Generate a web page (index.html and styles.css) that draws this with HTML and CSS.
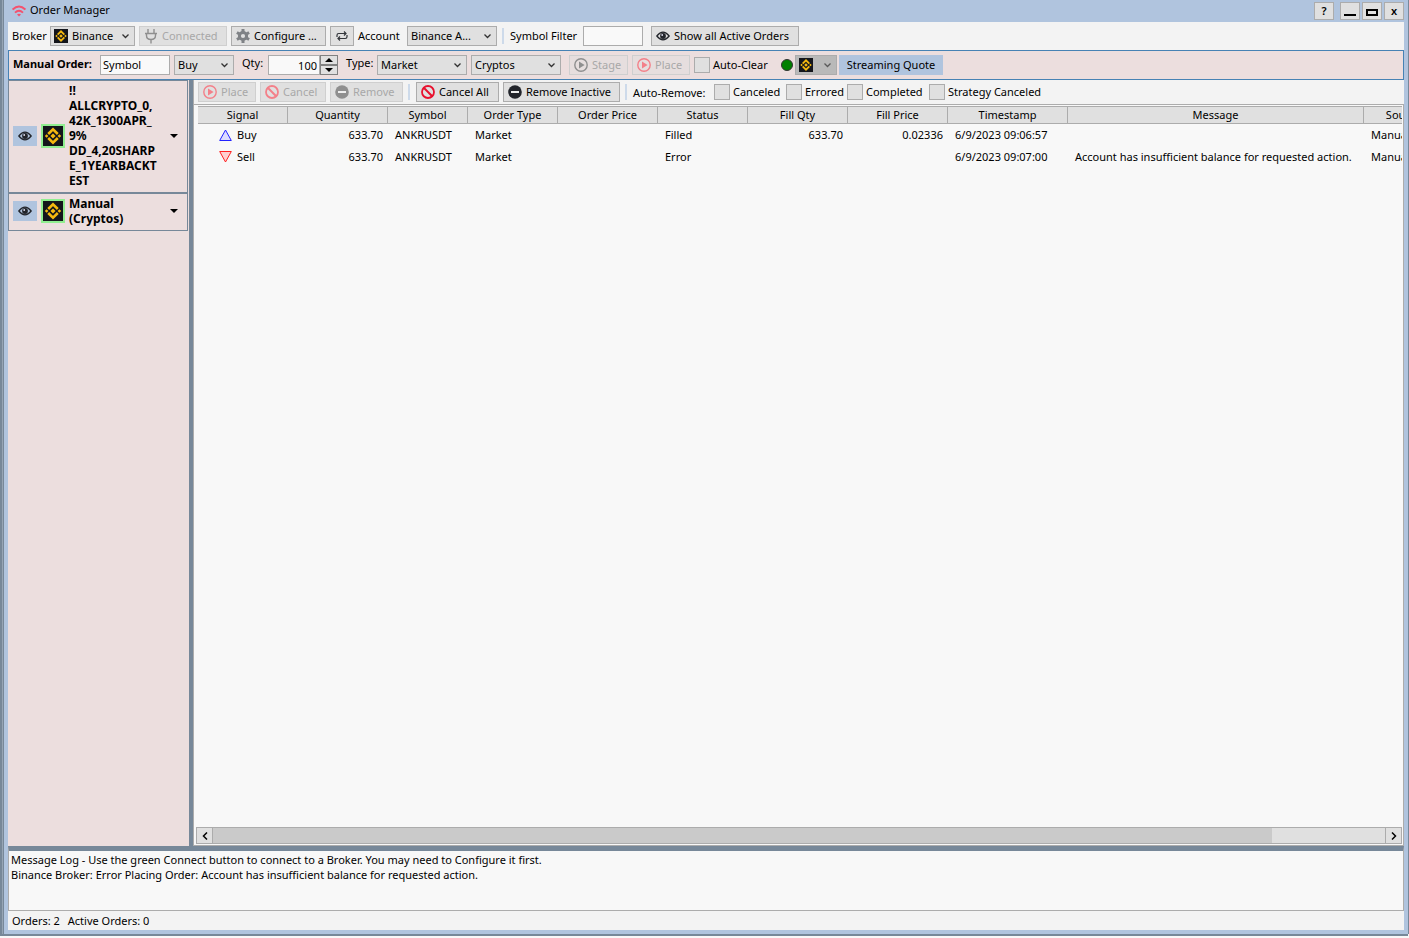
FILE: index.html
```
<!DOCTYPE html>
<html lang="en">
<head>
  <meta charset="UTF-8" />
  <title>Order Manager</title>
  <link rel="stylesheet" href="styles.css">
</head>
<body>
  <!-- Shared icons -->
  <svg class="sprite" aria-hidden="true">
    <symbol id="binance" viewBox="0 0 20 20">
      <rect width="20" height="20" fill="#14161c" />
      <g fill="none" stroke="#f5b90f" stroke-width="2.6">
        <path d="M5.2 8 L10 3.4 L14.8 8" />
        <path d="M5.2 12 L10 16.6 L14.8 12" />
      </g>
      <path fill="#f5b90f" d="M10 7.4 L12.6 10 L10 12.6 L7.4 10Z M3.6 8.2 L5.4 10 L3.6 11.8 L1.8 10Z M16.4 8.2 L18.2 10 L16.4 11.8 L14.6 10Z" />
    </symbol>
    <symbol id="eye" viewBox="0 0 14 10">
      <path d="M0.8 5 Q7 -2.6 13.2 5 Q7 12.6 0.8 5Z" fill="none" stroke="#22252b" stroke-width="1.2" />
      <circle cx="7" cy="5" r="2.9" fill="#22252b" />
      <circle cx="6.2" cy="4" r="0.9" fill="#dde" />
    </symbol>
    <symbol id="play" viewBox="0 0 14 14">
      <circle cx="7" cy="7" r="6.2" fill="none" stroke="currentColor" stroke-width="1.4" />
      <path d="M5 3.6 L10.6 7 L5 10.4Z" fill="currentColor" />
    </symbol>
    <symbol id="ban" viewBox="0 0 14 14">
      <circle cx="7" cy="7" r="6" fill="none" stroke="currentColor" stroke-width="1.8" />
      <path d="M2.8 2.8 L11.2 11.2" stroke="currentColor" stroke-width="2" />
    </symbol>
    <symbol id="minus" viewBox="0 0 14 14">
      <circle cx="7" cy="7" r="6.8" fill="currentColor" />
      <rect x="3" y="6" width="8" height="2" fill="#eee" />
    </symbol>
  </svg>

  <div class="window">
    <header class="titlebar">
      <svg class="wifi" width="14" height="12" viewBox="0 0 14 12" fill="none" stroke="#f4526e" stroke-width="1.9">
        <path d="M0.6 4.6 Q7 -1.4 13.4 4.6" />
        <path d="M3 7.6 Q7 3.8 11 7.6" />
        <path d="M5 9.6 Q7 7.8 9 9.6 L7 11.6Z" fill="#f4526e" stroke="none" />
      </svg>
      <h1 class="title">Order Manager</h1>
      <div class="window-buttons">
        <button class="win-btn help">?</button>
        <button class="win-btn" aria-label="Minimize"><svg width="12" height="12"><path d="M0 10h12" stroke="#000" stroke-width="2" /></svg></button>
        <button class="win-btn" aria-label="Maximize"><svg width="12" height="12"><path d="M1 5h10v5h-10z" fill="none" stroke="#000" stroke-width="2" /></svg></button>
        <button class="win-btn">x</button>
      </div>
    </header>

    <div class="toolbar broker-bar">
      <label class="broker-label" for="broker">Broker</label>
      <div class="picker broker-picker">
        <svg width="14" height="14"><use href="#binance" /></svg>
        <select id="broker"><option>Binance</option></select>
      </div>
      <button class="btn connected" disabled>
        <svg class="gray" width="14" height="16" viewBox="0 0 14 16" fill="none" stroke="currentColor" stroke-width="1.4">
          <path d="M4 1v4M10 1v4M1 5.5h12M2.5 5.5v2q0 4 4.5 4t4.5-4v-2M7 11.5v4" />
        </svg>
        Connected
      </button>
      <button class="btn configure">
        <svg width="14" height="14" viewBox="0 0 14 14">
          <circle cx="7" cy="7" r="3.6" fill="none" stroke="#7f8286" stroke-width="3" />
          <path d="M7 0v3M7 11v3M0.9 3.5l2.6 1.5M10.5 9l2.6 1.5M0.9 10.5l2.6-1.5M10.5 5l2.6-1.5" stroke="#7f8286" stroke-width="3" />
        </svg>
        Configure ...
      </button>
      <button class="btn refresh" aria-label="Refresh">
        <svg width="12" height="10" viewBox="0 0 12 10" fill="none" stroke="#33363b" stroke-width="1.2">
          <path d="M1 6V4.2Q1 2.5 2.7 2.5H9.5M8 0.5L10 2.5L8 4.5" />
          <path d="M11 4V5.8Q11 7.5 9.3 7.5H2.5M4 5.5L2 7.5L4 9.5" />
        </svg>
      </button>
      <label class="account-label" for="account">Account</label>
      <select id="account" class="account"><option>Binance A...</option></select>
      <span class="separator"></span>
      <label class="filter-label" for="filter">Symbol Filter</label>
      <input id="filter" class="filter" type="text">
      <button class="btn show-all"><svg width="14" height="10"><use href="#eye" /></svg>Show all Active Orders</button>
    </div>

    <div class="toolbar manual-bar">
      <strong class="manual-label">Manual Order:</strong>
      <input class="symbol" type="text" value="Symbol" aria-label="Symbol">
      <select class="side" aria-label="Side"><option>Buy</option></select>
      <label class="raised qty-label" for="qty">Qty:</label>
      <div class="spinner">
        <input id="qty" type="text" value="100">
        <div class="spinner-buttons">
          <button aria-label="Increase"><svg width="8" height="4"><path d="M0 4L4 0L8 4Z" /></svg></button>
          <button aria-label="Decrease"><svg width="8" height="4"><path d="M0 0L4 4L8 0Z" /></svg></button>
        </div>
      </div>
      <label class="raised type-label" for="type">Type:</label>
      <select id="type" class="type"><option>Market</option></select>
      <select class="type" aria-label="Asset class"><option>Cryptos</option></select>
      <button class="btn stage" disabled><svg class="gray" width="14" height="14"><use href="#play" /></svg>Stage</button>
      <button class="btn place" disabled><svg class="pink" width="14" height="14"><use href="#play" /></svg>Place</button>
      <label class="check auto-clear"><input type="checkbox">Auto-Clear</label>
      <span class="status-dot"></span>
      <div class="picker quote-picker">
        <svg width="14" height="14"><use href="#binance" /></svg>
        <select aria-label="Quote source" disabled><option></option></select>
      </div>
      <button class="quote">Streaming Quote</button>
    </div>

    <main class="main">
      <aside class="sidebar">
        <div class="strategy">
          <button class="eye-btn" aria-label="Show orders"><svg width="14" height="10"><use href="#eye" /></svg></button>
          <svg class="logo" width="24" height="24"><use href="#binance" /></svg>
          <strong class="strategy-name">!!<br>ALLCRYPTO_0,<wbr>42K_1300APR_<wbr>9% DD_4,20SHARP<wbr>E_1YEARBACKT<wbr>EST</strong>
          <button class="arrow" aria-label="Menu"><svg width="8" height="4"><path d="M0 0H8L4 4Z" /></svg></button>
        </div>
        <div class="strategy">
          <button class="eye-btn" aria-label="Show orders"><svg width="14" height="10"><use href="#eye" /></svg></button>
          <svg class="logo" width="24" height="24"><use href="#binance" /></svg>
          <strong class="strategy-name">Manual (Cryptos)</strong>
          <button class="arrow" aria-label="Menu"><svg width="8" height="4"><path d="M0 0H8L4 4Z" /></svg></button>
        </div>
      </aside>

      <section class="orders">
        <div class="toolbar orders-bar">
          <button class="btn place" disabled><svg class="pink" width="14" height="14"><use href="#play" /></svg>Place</button>
          <button class="btn cancel" disabled><svg class="pink" width="14" height="14"><use href="#ban" /></svg>Cancel</button>
          <button class="btn remove" disabled><svg class="gray" width="14" height="14"><use href="#minus" /></svg>Remove</button>
          <span class="separator"></span>
          <button class="btn cancel-all"><svg class="red" width="14" height="14"><use href="#ban" /></svg>Cancel All</button>
          <button class="btn remove-inactive"><svg class="dark" width="14" height="14"><use href="#minus" /></svg>Remove Inactive</button>
          <span class="separator"></span>
          <span class="auto-remove">Auto-Remove:</span>
          <label class="check canceled"><input type="checkbox">Canceled</label>
          <label class="check errored"><input type="checkbox">Errored</label>
          <label class="check completed"><input type="checkbox">Completed</label>
          <label class="check"><input type="checkbox">Strategy Canceled</label>
        </div>

        <div class="grid">
          <div class="grid-view">
            <table>
              <colgroup>
                <col class="w90"><col class="w100"><col class="w80"><col class="w90"><col class="w100">
                <col class="w90"><col class="w100"><col class="w100"><col class="w120"><col class="w-message"><col class="w80">
              </colgroup>
              <thead>
                <tr>
                  <th>Signal</th><th>Quantity</th><th>Symbol</th><th>Order Type</th><th>Order Price</th>
                  <th>Status</th><th>Fill Qty</th><th>Fill Price</th><th>Timestamp</th><th>Message</th><th>Source</th>
                </tr>
              </thead>
              <tbody>
                <tr>
                  <td class="signal"><svg width="13" height="12"><path d="M6.5 1L12.3 11.5H0.7Z" fill="#dcdcff" stroke="#22f" /></svg>Buy</td>
                  <td class="num">633.70</td><td>ANKRUSDT</td><td>Market</td><td></td>
                  <td>Filled</td><td class="num">633.70</td><td class="num">0.02336</td>
                  <td>6/9/2023 09:06:57</td><td></td><td>Manual</td>
                </tr>
                <tr>
                  <td class="signal"><svg width="13" height="12"><path d="M6.5 11L12.3 0.5H0.7Z" fill="#ffd0d0" stroke="#f22" /></svg>Sell</td>
                  <td class="num">633.70</td><td>ANKRUSDT</td><td>Market</td><td></td>
                  <td>Error</td><td></td><td></td>
                  <td>6/9/2023 09:07:00</td><td>Account has insufficient balance for requested action.</td><td>Manual</td>
                </tr>
              </tbody>
            </table>
          </div>
          <div class="scrollbar">
            <button aria-label="Scroll left"><svg width="6" height="8"><path d="M5 0.5L1.5 4L5 7.5" /></svg></button>
            <div class="track"><div class="thumb"></div></div>
            <button aria-label="Scroll right"><svg width="6" height="8"><path d="M1 0.5L4.5 4L1 7.5" /></svg></button>
          </div>
        </div>
      </section>
    </main>

    <div class="log">
      <p>Message Log - Use the green Connect button to connect to a Broker. You may need to Configure it first.</p>
      <p>Binance Broker: Error Placing Order: Account has insufficient balance for requested action.</p>
    </div>

    <footer class="statusbar"><span>Orders: 2</span><span>Active Orders: 0</span></footer>
  </div>
</body>
</html>
```
FILE: styles.css
```
* {
  box-sizing: border-box;
}

body {
  margin: 0;
  height: 100vh;
  background: #f8f8f8;
  color: #000;
  font: 11px/15px "Noto Sans", "Open Sans", sans-serif;
}

button,
input,
select {
  margin: 0;
  padding: 0;
  border-radius: 0;
  font: inherit;
  color: inherit;
}

svg {
  flex: none;
}

.sprite {
  position: absolute;
  width: 0;
  height: 0;
}

/* Window frame */
.window {
  height: calc(100vh - 4px);
  margin: 0 1px 0 4px;
  display: flex;
  flex-direction: column;
  background: #f3f3f3;
  border: solid #b0c4de;
  border-width: 0 4px 4px;
  box-shadow: 0 2px 0 #778899, 1px 0 0 #778899, -1px 0 0 #778899, -2px 0 0 #96a5b5, -4px 0 0 #778899, -4px 2px 0 #778899;
}

.titlebar {
  flex: none;
  height: 22px;
  padding-left: 4px;
  display: flex;
  align-items: center;
  gap: 4px;
  background: #b0c4de;
}

.title {
  margin: 0;
  padding-bottom: 3px;
  font-size: 11px;
  font-weight: normal;
}

.window-buttons {
  margin-left: auto;
  display: flex;
  gap: 2px;
}

.win-btn {
  width: 20px;
  height: 18px;
  padding-bottom: 1px;
  display: flex;
  align-items: center;
  justify-content: center;
  background: #e0e0e0;
  border: 1px solid #acacac;
  font-weight: 600;
}

.help {
  margin-right: 4px;
}

/* Toolbars */
.toolbar {
  flex: none;
  display: flex;
  align-items: center;
  white-space: nowrap;
}

.toolbar label {
  line-height: 14px;
}

.btn {
  height: 20px;
  padding: 0 4px;
  display: flex;
  align-items: center;
  gap: 4px;
  background: #e0e0e0;
  border: 1px solid #acacac;
  line-height: 14px;
}

.btn:disabled {
  color: #a8a8a8;
  border-color: #cfcfcf;
}

.manual-bar .btn:disabled {
  background: #e6dede;
}

.btn .gray {
  color: #8f8f8f;
}

.btn .pink {
  color: #f38089;
}

.btn .red {
  color: #e8112d;
}

.btn .dark {
  color: #22252b;
}

select {
  height: 20px;
  padding: 0 16px 2px 3px;
  appearance: none;
  border: 1px solid #acacac;
  background: #e0e0e0 url("data:image/svg+xml,%3Csvg xmlns='http://www.w3.org/2000/svg' width='7' height='5'%3E%3Cpath d='M.5.5l3 3 3-3' fill='none' stroke='%23333' stroke-width='1.3'/%3E%3C/svg%3E") no-repeat right 5px center;
}

input[type="text"] {
  height: 20px;
  padding: 0 2px 2px;
  background: #f9f9f9;
  border: 1px solid #acacac;
}

.picker {
  height: 20px;
  padding-left: 3px;
  display: flex;
  align-items: center;
  background: #e0e0e0;
  border: 1px solid #acacac;
}

.picker select {
  flex: 1;
  height: 18px;
  padding: 0 0 2px 4px;
  border: 0;
  background-color: transparent;
}

.separator {
  width: 2px;
  height: 16px;
  background: #cddaea;
}

.check {
  display: flex;
  align-items: center;
  gap: 3px;
}

.check input {
  appearance: none;
  width: 16px;
  height: 16px;
  background: #e0e0e0;
  border: 1px solid #acacac;
}

.broker-bar {
  height: 28px;
  padding-left: 4px;
}

.broker-label {
  width: 38px;
}

.broker-picker {
  width: 85px;
  margin-right: 4px;
}

.connected {
  width: 88px;
}

.configure {
  width: 95px;
  margin: 0 4px;
}

.refresh {
  width: 24px;
  margin-right: 4px;
  justify-content: center;
}

.account-label {
  width: 49px;
}

.account {
  width: 90px;
  margin-right: 5px;
}

.broker-bar .separator {
  margin-right: 6px;
}

.filter-label {
  width: 73px;
}

.filter {
  width: 60px;
  margin-right: 8px;
}

.show-all {
  width: 148px;
}

.manual-bar {
  height: 30px;
  padding-left: 4px;
  background: #ecdede;
  border: 1px solid #4682b4;
}

.manual-label,
.raised {
  padding-bottom: 4px;
}

.manual-label {
  width: 87px;
}

.symbol {
  width: 70px;
  margin-right: 4px;
}

.side {
  width: 60px;
  margin-right: 8px;
}

.qty-label {
  width: 26px;
}

.spinner {
  width: 70px;
  display: flex;
  margin-right: 8px;
}

.spinner input[type="text"] {
  flex: 1;
  min-width: 0;
  padding-bottom: 0;
  text-align: right;
}

.spinner-buttons {
  width: 18px;
  display: flex;
  flex-direction: column;
}

.spinner-buttons button {
  flex: 1;
  display: flex;
  align-items: center;
  justify-content: center;
  background: #e0e0e0;
  border: 1px solid #808080;
}

.type-label {
  width: 31px;
}

.type {
  width: 90px;
  margin-right: 4px;
}

.stage {
  width: 59px;
  margin: 0 4px;
}

.place {
  width: 58px;
  margin-right: 4px;
}

.auto-clear {
  width: 87px;
}

.status-dot {
  width: 12px;
  height: 12px;
  background: #008000;
  border: 1px solid #333;
  border-radius: 50%;
}

.quote-picker {
  width: 42px;
  margin: 0 2px;
  background: #b9b9b9;
}

.quote {
  height: 20px;
  width: 104px;
  padding-bottom: 1px;
  background: #b0c4de;
  border: 0;
}

/* Strategies */
.main {
  flex: 1;
  min-height: 0;
  display: flex;
}

.sidebar {
  width: 185px;
  flex: none;
  background: #ecdede;
  border-right: 4px solid #778899;
}

.strategy {
  margin-right: 1px;
  padding: 2px 4px 4px;
  display: flex;
  align-items: center;
  gap: 4px;
  border: 1px solid #778899;
}

.eye-btn {
  width: 24px;
  height: 20px;
  display: flex;
  align-items: center;
  justify-content: center;
  background: #b0c4de;
  border: 0;
}

.logo {
  border: 2px solid #90ee90;
}

.strategy-name {
  width: 88px;
  font-size: 12px;
}

.arrow {
  margin-left: auto;
  padding: 5px;
  display: flex;
  background: none;
  border: 0;
}

/* Orders */
.orders {
  flex: 1;
  min-width: 0;
  display: flex;
  flex-direction: column;
  border-left: 1px solid #acacac;
}

.orders-bar {
  height: 24px;
  padding-left: 4px;
}

.cancel {
  width: 66px;
  margin-right: 4px;
}

.remove {
  width: 73px;
}

.orders-bar .separator {
  margin: 0 6px 0 5px;
}

.cancel-all {
  width: 83px;
  margin-right: 4px;
}

.remove-inactive {
  width: 117px;
}

.auto-remove {
  width: 81px;
}

.canceled {
  width: 72px;
}

.errored {
  width: 61px;
}

.completed {
  width: 82px;
}

.grid {
  flex: 1;
  min-height: 0;
  padding: 1px 1px 1px 2px;
  display: flex;
  flex-direction: column;
  background: #f8f8f8;
  border: 1px solid #acacac;
  border-left: 0;
}

.grid-view {
  flex: 1;
  overflow: hidden;
  padding-left: 2px;
}

table {
  width: 1246px;
  table-layout: fixed;
  border-collapse: separate;
  border-spacing: 0;
}

th {
  height: 18px;
  padding: 0;
  font-weight: normal;
  line-height: 14px;
  background: #e0e0e0;
  border: solid #acacac;
  border-width: 1px 1px 1px 0;
}

td {
  height: 22px;
  padding: 0 5px 2px 7px;
  white-space: nowrap;
}

.num {
  text-align: right;
}

.signal {
  padding-left: 21px;
}

.signal svg {
  margin-right: 5px;
  vertical-align: -2px;
}

.w80 { width: 80px; }
.w90 { width: 90px; }
.w100 { width: 100px; }
.w120 { width: 120px; }
.w-message { width: 296px; }

.scrollbar {
  height: 17px;
  display: flex;
  border: 1px solid #acacac;
}

.scrollbar button {
  width: 16px;
  display: flex;
  align-items: center;
  justify-content: center;
  background: #e0e0e0;
  border: 0;
  border-right: 1px solid #acacac;
}

.scrollbar button:last-child {
  border-width: 0 0 0 1px;
  border-left: 1px solid #acacac;
}

.scrollbar path {
  fill: none;
  stroke: #000;
  stroke-width: 1.5;
}

.track {
  flex: 1;
  background: #e0e0e0;
}

.thumb {
  width: 90.4%;
  height: 100%;
  background: #cacaca;
}

/* Log and status */
.log {
  flex: none;
  height: 65px;
  padding: 1px 2px;
  border: 1px solid #acacac;
  border-top: 5px solid #778899;
  background: #f8f8f8;
}

.log p {
  margin: 0;
}

.statusbar {
  flex: none;
  height: 19px;
  padding-left: 4px;
  display: flex;
  align-items: center;
  gap: 8px;
}
```
